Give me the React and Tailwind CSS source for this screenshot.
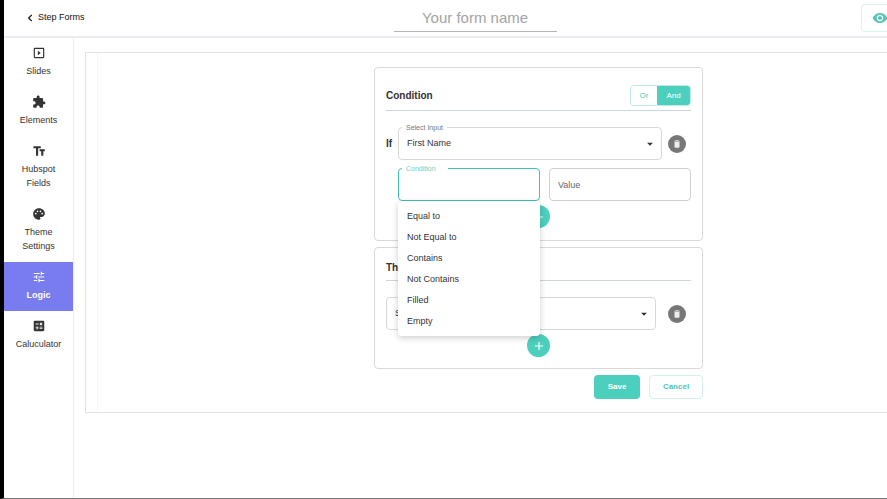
import { useState } from "react"
import { FaChevronLeft } from "react-icons/fa"
import {
  MdAdd,
  MdArrowDropDown,
  MdCalculate,
  MdDelete,
  MdExtension,
  MdOutlineSlideshow,
  MdPalette,
  MdTune,
  MdVisibility,
} from "react-icons/md"

function FieldsIcon({ className }) {
  return (
    <svg viewBox="0 0 24 24" fill="none" stroke="currentColor" strokeWidth="3.6" className={className}>
      <path d="M2.5 5.5h12.5M8.7 5.5v14.5M13 10.7h9M17.6 10.7v9.3" />
    </svg>
  )
}

const navItems = [
  { label: "Slides", icon: MdOutlineSlideshow },
  { label: "Elements", icon: MdExtension },
  { label: "Hubspot Fields", icon: FieldsIcon },
  { label: "Theme Settings", icon: MdPalette },
  { label: "Logic", icon: MdTune },
  { label: "Caluculator", icon: MdCalculate },
]

const conditions = ["Equal to", "Not Equal to", "Contains", "Not Contains", "Filled", "Empty"]

function Header() {
  return (
    <header className="-mr-[59px] flex h-[38px] shrink-0 border-b-2 border-[#ebecf2]">
      <div className="flex flex-1 items-center">
        <a href="#forms" className="ml-[22px] flex items-center gap-1 text-[9px] font-medium text-[#111]">
          <FaChevronLeft className="size-2" />
          Step Forms
        </a>
      </div>
      <input
        aria-label="Form name"
        placeholder="Your form name"
        className="h-8 w-[163px] border-b border-[#b4b4b4] pt-1 text-center text-[15px] outline-none placeholder:text-[#a3a3a3]"
      />
      <div className="flex flex-1 items-start justify-end pt-1">
        <button
          aria-label="Preview"
          className="mr-12 flex h-7 w-[37px] items-center justify-center rounded border border-[#d9f3f0] text-[#55c4b9]"
        >
          <MdVisibility className="size-4" />
        </button>
      </div>
    </header>
  )
}

function Sidebar({ active, onSelect }) {
  return (
    <nav className="flex w-[70px] shrink-0 flex-col border-r border-[#ececee]">
      {navItems.map(({ label, icon: Icon }) => (
        <button
          key={label}
          onClick={() => onSelect(label)}
          className={
            active === label
              ? "flex flex-col items-center gap-1 bg-[#797cee] px-2 pt-2 pb-[9px] text-[9px] leading-[14px] font-bold text-white"
              : "flex flex-col items-center gap-1 px-2 pt-2 pb-[9px] text-[9px] leading-[14px] text-[#333]"
          }
        >
          <Icon className="size-[14px]" />
          {label}
        </button>
      ))}
    </nav>
  )
}

function SelectBox({ id, label, hideLabel, value, className }) {
  return (
    <div className={`relative ${className}`}>
      <select
        id={id}
        aria-label={label}
        defaultValue={value}
        className="block h-[33px] w-full appearance-none rounded border border-[#d8d8d8] bg-white px-2 text-[9px] text-[#333] outline-none"
      >
        <option>{value}</option>
      </select>
      {!hideLabel && (
        <label
          htmlFor={id}
          className="absolute -top-1 left-1 bg-white px-1 text-[7px] leading-[9px] text-[#777]"
        >
          {label}
        </label>
      )}
      <MdArrowDropDown className="pointer-events-none absolute top-[10px] right-[5px] size-[14px] text-[#333]" />
    </div>
  )
}

function DeleteButton() {
  return (
    <button
      aria-label="Delete"
      className="flex size-[18px] shrink-0 items-center justify-center rounded-full bg-[#777] text-[#eee]"
    >
      <MdDelete className="size-[10px]" />
    </button>
  )
}

function AddButton() {
  return (
    <button
      aria-label="Add"
      className="mx-auto mt-1 flex size-[23px] items-center justify-center rounded-full bg-[#4dcfbe] text-white"
    >
      <MdAdd className="size-[14px]" />
    </button>
  )
}

function ConditionCard() {
  const [mode, setMode] = useState("And")
  const [open, setOpen] = useState(true)
  const [condition, setCondition] = useState("")

  const pick = (value) => {
    setCondition(value)
    setOpen(false)
  }

  return (
    <section className="rounded border border-[#d8dada] px-[11px] pb-3">
      <div className="flex items-center justify-between border-b border-[#c9d8dc] pt-[17px] pb-1">
        <h2 className="text-[10px] leading-[14px] font-bold text-[#333]">Condition</h2>
        <div className="flex h-[21px] w-[61px] overflow-hidden rounded border border-[#bfebe5] text-[8px]">
          {["Or", "And"].map((m) => (
            <button
              key={m}
              onClick={() => setMode(m)}
              className={mode === m ? "w-[33px] bg-[#4dcfbe] text-white" : "flex-1 bg-white text-[#4dcfbe]"}
            >
              {m}
            </button>
          ))}
        </div>
      </div>

      <div className="flex items-center pt-4 pr-[5px]">
        <span className="w-3 shrink-0 text-[10px] font-bold text-[#333]">If</span>
        <SelectBox id="source" label="Select Input" value="First Name" className="mr-[6px] flex-1" />
        <DeleteButton />
      </div>

      <div className="grid grid-cols-2 gap-[9px] pt-2 pl-3">
        <div className="relative">
          <input
            id="condition"
            role="combobox"
            aria-expanded={open}
            aria-controls="condition-list"
            value={condition}
            onChange={(e) => setCondition(e.target.value)}
            onFocus={() => setOpen(true)}
            className="block h-[33px] w-full rounded border border-[#3fc0b0] px-2 text-[9px] text-[#333] outline-none"
          />
          <label
            htmlFor="condition"
            className="absolute -top-1 left-1 bg-white pr-3 pl-1 text-[7px] leading-[9px] text-[#6bd0c4]"
          >
            Condition
          </label>
          {open && (
            <ul
              id="condition-list"
              role="listbox"
              aria-label="Condition"
              className="absolute top-full left-0 z-10 w-full rounded bg-white pt-[5px] pb-1 text-[9px] leading-[21px] text-[#333] shadow-[0_2px_6px_rgba(0,0,0,0.2)]"
            >
              {conditions.map((c) => (
                <li key={c} role="option" aria-selected={c === condition} onClick={() => pick(c)} className="px-[9px]">
                  {c}
                </li>
              ))}
            </ul>
          )}
        </div>
        <input
          aria-label="Value"
          placeholder="Value"
          className="h-[33px] w-full rounded border border-[#d0d0d0] px-2 text-[9px] text-[#333] outline-none placeholder:text-[#666]"
        />
      </div>
      <AddButton />
    </section>
  )
}

function ThenCard() {
  return (
    <section className="rounded border border-[#d8dada] px-[11px] pb-[11px]">
      <div className="border-b border-[#ccd6d6] pt-[13px] pb-[5px]">
        <h2 className="text-[10px] leading-[14px] font-bold text-[#333]">Then</h2>
      </div>
      <div className="flex items-center pt-4 pr-[5px]">
        <SelectBox id="target" label="Target" hideLabel value="Select Input" className="mr-3 flex-1" />
        <DeleteButton />
      </div>
      <AddButton />
    </section>
  )
}

export default function App() {
  const [active, setActive] = useState("Logic")

  return (
    <div className="flex min-h-screen flex-col overflow-hidden border-b border-l-4 border-b-[#777] border-l-black bg-white font-['Liberation_Sans',Arial,sans-serif]">
      <Header />
      <div className="flex flex-1">
        <Sidebar active={active} onSelect={setActive} />
        <main className="-mr-[105px] flex-1 pt-[14px] pl-[11px]">
          <div className="border border-[#dfe3e3] pl-[11px]">
            <div className="border-l border-[#f7f7f7] pt-[14px] pr-3 pb-[13px]">
              <div className="mx-auto flex max-w-[329px] flex-col gap-[6px]">
                <ConditionCard />
                <ThenCard />
                <div className="flex justify-end gap-[9px] text-[8px] font-bold">
                  <button className="h-6 w-[46px] rounded bg-[#4dcfbe] text-white">Save</button>
                  <button className="h-6 w-[54px] rounded border border-[#d3f0ec] text-[#4dc8b8]">Cancel</button>
                </div>
              </div>
            </div>
          </div>
        </main>
      </div>
    </div>
  )
}
